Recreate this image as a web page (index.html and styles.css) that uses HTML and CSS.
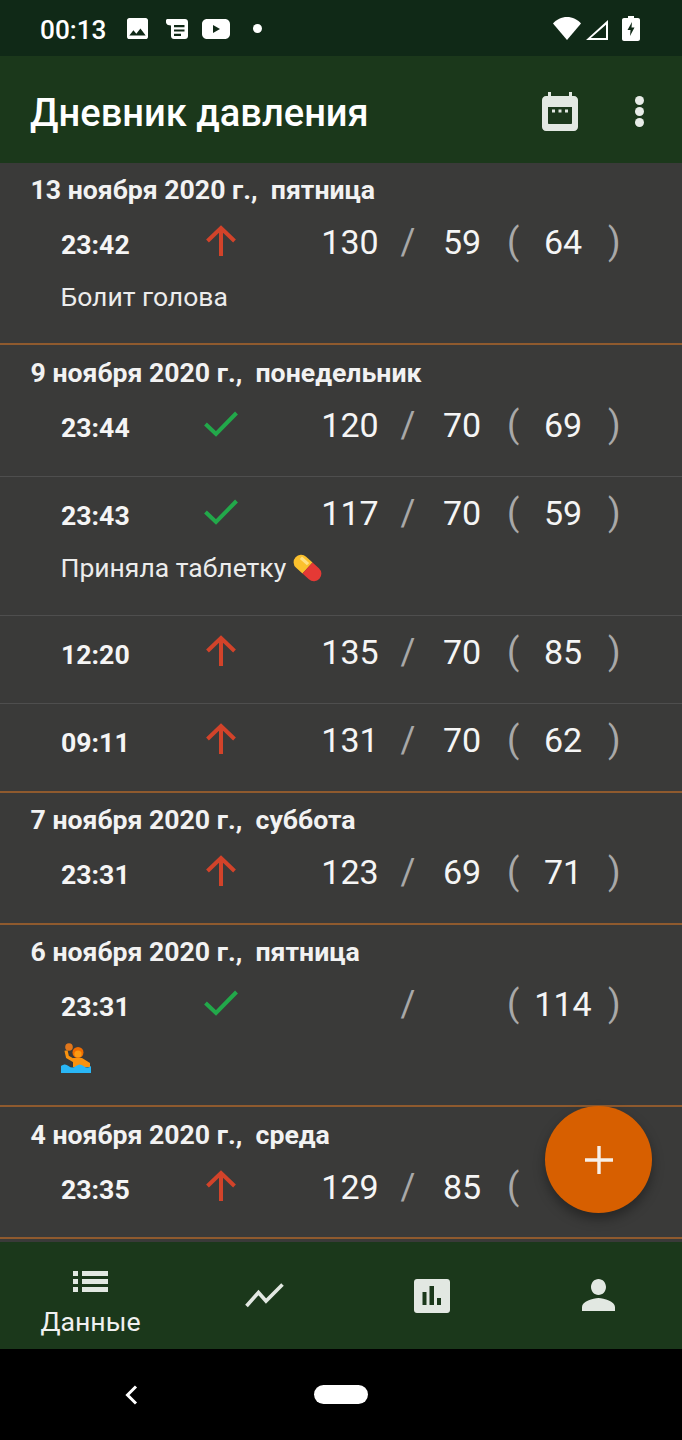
FILE: index.html
```html
<!DOCTYPE html>
<html lang="ru">
<head>
<meta charset="utf-8">
<title>Дневник давления</title>
<link rel="stylesheet" href="styles.css">
</head>
<body>
<div class="phone">
  <div class="statusbar">
    <span class="clock">00:13</span>
    <svg class="st-img" viewBox="3 3 18 18"><path d="M21 19V5c0-1.100-.9-2-2-2H5c-1.100 0-2 .9-2 2v14c0 1.100.9 2 2 2h14c1.100 0 2-.9 2-2zM8.500 13.500l2.500 3.010L14.500 12l4.500 6H5l3.500-4.500z"/></svg>
    <svg class="st-news" viewBox="0 0 22 20"><path fill-rule="evenodd" d="M0 1.500C0 .7.700 0 1.500 0H19c1.700 0 3 1.300 3 3v14c0 1.700-1.300 3-3 3H8c-1.700 0-3-1.300-3-3V6.500L2 6C.8 5.500 0 4.500 0 3.300zM8 6v2.200h10.500V6zM8 10.400v2.200h10.500v-2.200zM8 14.800V17h7v-2.200z"/></svg>
    <svg class="st-yt" viewBox="0 0 28 20"><path fill-rule="evenodd" d="M5 0h18c2.800 0 5 2.200 5 5v10c0 2.800-2.200 5-5 5H5c-2.800 0-5-2.200-5-5V5c0-2.800 2.200-5 5-5zM11 6v8l7-4z"/></svg>
    <span class="st-dot"></span>
    <span class="st-spacer"></span>
    <svg class="st-wifi" viewBox="0 0 28 23"><path d="M14 23 0 6.500C3.500 2.500 8.500 0 14 0s10.500 2.500 14 6.500z"/></svg>
    <svg class="st-signal" viewBox="0 0 22 20"><path fill-rule="evenodd" d="M22 0v20H0zM20 4.800 4.800 18H20z"/></svg>
    <svg class="st-batt" viewBox="0 0 18 25"><path fill-rule="evenodd" d="M6 0h6v2h4c1.100 0 2 .9 2 2v19c0 1.100-.9 2-2 2H2c-1.100 0-2-.9-2-2V4c0-1.100.9-2 2-2h4zM10 6 5.500 14H8.500L8 20l4.500-8.500H9.500z"/></svg>
  </div>

  <header class="appbar">
    <h1 class="title">Дневник давления</h1>
    <svg class="ab-cal" viewBox="0 0 36 39"><path fill-rule="evenodd" d="M6 0h3v4h18V0h3v4h2c2.200 0 4 1.800 4 4v27c0 2.200-1.800 4-4 4H4c-2.200 0-4-1.800-4-4V8c0-2.200 1.800-4 4-4h2zM6 15v16c0 .6.400 1 1 1h22c.6 0 1-.4 1-1V15zM10 17.500h3v3h-3zM16.500 17.500h3v3h-3zM23 17.500h3v3h-3z"/></svg>
    <div class="ab-more"><span></span><span></span><span></span></div>
  </header>

  <main class="list">
    <section class="group">
      <div class="date">13 ноября 2020 г.,&nbsp; пятница</div>
      <div class="entry has-note">
        <div class="vals"><span class="time">23:42</span><svg class="mark up" viewBox="0 0 32 32"><path d="M16 31V3M2.500 16 16 3l13.500 13"/></svg><span class="sys">130</span><span class="sep">/</span><span class="dia">59</span><span class="sep par">(</span><span class="pulse">64</span><span class="sep close">)</span></div>
        <div class="note">Болит голова</div>
      </div>
    </section>

    <section class="group after-note">
      <div class="date">9 ноября 2020 г.,&nbsp; понедельник</div>
      <div class="entry">
        <div class="vals"><span class="time">23:44</span><svg class="mark ok" viewBox="0 0 34 26"><path d="M1.500 13 12 23 32.500 2"/></svg><span class="sys">120</span><span class="sep">/</span><span class="dia">70</span><span class="sep par">(</span><span class="pulse">69</span><span class="sep close">)</span></div>
      </div>
      <div class="entry has-note">
        <div class="vals"><span class="time">23:43</span><svg class="mark ok" viewBox="0 0 34 26"><path d="M1.500 13 12 23 32.500 2"/></svg><span class="sys">117</span><span class="sep">/</span><span class="dia">70</span><span class="sep par">(</span><span class="pulse">59</span><span class="sep close">)</span></div>
        <div class="note">Приняла таблетку <svg class="emoji-pill" viewBox="3 1 26 28"><g transform="rotate(42 16 15)"><path fill="#fbc02d" d="M8 8h8v14H8a7 7 0 0 1 0-14z"/><path fill="#e53935" d="M16 8h8a7 7 0 0 1 0 14h-8z"/><path fill="#ffe082" d="M5 10.500h9v3H5z"/></g></svg></div>
      </div>
      <div class="entry">
        <div class="vals"><span class="time">12:20</span><svg class="mark up" viewBox="0 0 32 32"><path d="M16 31V3M2.500 16 16 3l13.500 13"/></svg><span class="sys">135</span><span class="sep">/</span><span class="dia">70</span><span class="sep par">(</span><span class="pulse">85</span><span class="sep close">)</span></div>
      </div>
      <div class="entry">
        <div class="vals"><span class="time">09:11</span><svg class="mark up" viewBox="0 0 32 32"><path d="M16 31V3M2.500 16 16 3l13.500 13"/></svg><span class="sys">131</span><span class="sep">/</span><span class="dia">70</span><span class="sep par">(</span><span class="pulse">62</span><span class="sep close">)</span></div>
      </div>
    </section>

    <section class="group">
      <div class="date">7 ноября 2020 г.,&nbsp; суббота</div>
      <div class="entry">
        <div class="vals"><span class="time">23:31</span><svg class="mark up" viewBox="0 0 32 32"><path d="M16 31V3M2.500 16 16 3l13.500 13"/></svg><span class="sys">123</span><span class="sep">/</span><span class="dia">69</span><span class="sep par">(</span><span class="pulse">71</span><span class="sep close">)</span></div>
      </div>
    </section>

    <section class="group">
      <div class="date">6 ноября 2020 г.,&nbsp; пятница</div>
      <div class="entry has-note">
        <div class="vals"><span class="time">23:31</span><svg class="mark ok" viewBox="0 0 34 26"><path d="M1.500 13 12 23 32.500 2"/></svg><span class="sys"></span><span class="sep">/</span><span class="dia"></span><span class="sep par">(</span><span class="pulse">114</span><span class="sep close">)</span></div>
        <div class="note"><svg class="emoji-polo" viewBox="0 0 30 30"><circle cx="8" cy="4" r="3.800" fill="#e0761c"/><path fill="none" stroke="#f9920f" stroke-width="3.200" d="M5 7.500 6.500 14l7 4"/><circle cx="17" cy="9.500" r="5.500" fill="#ef6c00"/><circle cx="17" cy="11" r="3.600" fill="#fb9a12"/><path fill="#f9920f" d="M12 15h9l8 5v4H12z"/><path fill="#29b6f6" d="M0 23c3-2 5-2 7.500 0s5 2 7.500 0 5-2 7.500 0 5 2 7.500 0v7H0z"/></svg></div>
      </div>
    </section>

    <section class="group after-note">
      <div class="date">4 ноября 2020 г.,&nbsp; среда</div>
      <div class="entry">
        <div class="vals"><span class="time">23:35</span><svg class="mark up" viewBox="0 0 32 32"><path d="M16 31V3M2.500 16 16 3l13.500 13"/></svg><span class="sys">129</span><span class="sep">/</span><span class="dia">85</span><span class="sep par">(</span></div>
      </div>
    </section>

    <button class="fab" aria-label="Добавить"><svg viewBox="0 0 28 28"><path d="M12.300 0h3.400v12.300H28v3.400H15.700V28h-3.400V15.700H0v-3.400h12.300z"/></svg></button>
  </main>

  <nav class="tabs">
    <div class="tab">
      <svg class="t-list" viewBox="0 0 35 21"><path d="M0 0h5v5H0zM9 0h26v5H9zM0 8h5v5H0zM9 8h26v5H9zM0 16h5v5H0zM9 16h26v5H9z"/></svg>
      <span class="tab-label">Данные</span>
    </div>
    <div class="tab"><svg class="t-trend" viewBox="0 0 39 25"><path d="M1.500 23 13.500 9.500 21 18 37.500 1.500" fill="none" stroke="currentColor" stroke-width="3.600"/></svg></div>
    <div class="tab"><svg class="t-chart" viewBox="0 0 36 34"><path fill-rule="evenodd" d="M3 0h30c1.700 0 3 1.300 3 3v28c0 1.700-1.300 3-3 3H3c-1.700 0-3-1.300-3-3V3C0 1.300 1.300 0 3 0zM8.500 13v13h4V13zM15.500 7v19h4.500V7zM23 19v7h4v-7z"/></svg></div>
    <div class="tab"><svg class="t-user" viewBox="0 0 33 32"><path d="M16.500 0c4.200 0 7.500 3.600 7.500 8s-3.300 8-7.500 8S9 12.400 9 8s3.300-8 7.500-8zM0 32v-4c0-5.500 11-9 16.500-9S33 22.500 33 28v4z"/></svg></div>
  </nav>

  <div class="sysnav">
    <svg class="sn-back" viewBox="0 0 13 20"><path d="M11 1.500 2.500 10l8.500 8.500"/></svg>
    <span class="sn-home"></span>
  </div>
</div>
</body>
</html>
```
FILE: styles.css
```css
* { box-sizing: border-box; }
html, body { margin: 0; padding: 0; }
body { background: #000; font-family: Roboto, "Noto Sans", sans-serif; color: #fff; }
.phone { width: 682px; height: 1440px; display: flex; flex-direction: column; overflow: hidden; }

.statusbar { height: 56px; flex: none; background: #102917; display: flex; align-items: center; padding: 0 42px 0 40px; }
.clock { font-size: 26.2px; font-weight: 500; margin-top: 3px; width: 87px; }
.statusbar svg { display: block; fill: #fff; }
.st-img { width: 21px; height: 21px; margin-top: 1px; }
.st-news { width: 22px; height: 20px; margin-left: 18px; margin-top: 1px; }
.st-yt { width: 28px; height: 20px; margin-left: 14px; margin-top: 1px; }
.st-dot { width: 9px; height: 9px; border-radius: 50%; background: #fff; margin-left: 23px; margin-top: 1px; }
.st-spacer { flex: 1; }
.st-wifi { width: 28px; height: 23px; }
.st-signal { width: 22px; height: 20px; margin-left: 5px; margin-top: 3px; }
.st-batt { width: 18px; height: 25px; margin-left: 14px; }

.appbar { height: 107px; flex: none; background: #1b381b; display: flex; align-items: center; padding-left: 30px; }
.title { margin: 7px 0 0; font-size: 38.1px; line-height: 44px; font-weight: 500; flex: 1; color: #fff; }
.ab-cal { width: 36px; height: 39px; fill: #e2e8e2; display: block; margin-top: 3px; }
.ab-more { width: 9px; margin: 3px 38px 0 57px; display: flex; flex-direction: column; gap: 2px; }
.ab-more span { width: 9px; height: 9px; border-radius: 50%; background: #e8ece8; }

.list { flex: 1; min-height: 0; background: #3a3a39; position: relative; overflow: hidden; }
.group { border-bottom: 2px solid #8f5a2e; }
.group.after-note { margin-top: 1px; }
.date { height: 43px; padding: 13px 0 0 30.5px; font-size: 26.67px; line-height: 28px; font-weight: 700; color: #f2f2f2; white-space: pre; }
.entry { height: 88px; border-bottom: 1px solid #4e4e4e; }
.entry:last-child { border-bottom: 0; height: 87px; }
.entry.has-note { height: 139px; }
.entry.has-note:last-child { height: 137px; }
.group:last-of-type .entry { height: 86px; }
.vals { height: 76px; display: grid; grid-template-columns: 129px 60px 50px 100px 16px 92px 8px 94px 7px; align-items: center; padding-left: 61px; }
.time { font-size: 26.67px; font-weight: 700; color: #f5f5f5; padding-top: 1px; }
.mark { fill: none; justify-self: center; display: block; stroke-width: 4px; margin-left: 2px; margin-top: -6px; grid-column: 2; }
.mark.up { width: 32px; height: 32px; stroke: #d2432a; }
.mark.ok { width: 34px; height: 26px; stroke: #22a84a; }
.sys, .dia, .pulse { font-size: 34px; text-align: center; color: #f5f5f5; line-height: 40px; margin-top: -4px; }
.sys { grid-column: 4; }
.dia { grid-column: 6; }
.pulse { grid-column: 8; }
.sep { font-size: 36px; line-height: 40px; color: #a8a8a8; text-align: center; margin-top: -4px; }
.sep.par { margin-left: -1px; }
.sep.close { margin-left: -2px; }
.note { font-size: 26.5px; line-height: 32px; padding: 0 0 0 60.5px; margin-top: -1px; color: #ececec; display: flex; align-items: center; gap: 6px; }
.emoji-pill { width: 31px; height: 30px; display: block; }
.emoji-polo { width: 30px; height: 30px; display: block; }

.fab { position: absolute; left: 545px; top: 943px; width: 107px; height: 107px; border-radius: 50%; border: 0; padding: 0; background: #d75f00; box-shadow: 0 6px 12px rgba(0,0,0,.35); display: flex; align-items: center; justify-content: center; }
.fab svg { width: 28px; height: 28px; fill: #f7efe8; display: block; }

.tabs { height: 107px; flex: none; background: #1b381b; display: grid; grid-template-columns: 181px 167px 167px 167px; color: #e2e8e2; }
.tab { display: flex; flex-direction: column; align-items: center; justify-content: center; }
.tab svg { display: block; fill: #e2e8e2; }
.tab:first-child { justify-content: flex-start; padding-top: 29px; }
.t-list { width: 35px; height: 21px; }
.tab-label { font-size: 26.67px; line-height: 30px; margin-top: 15px; color: #f0f0f0; }
.t-trend { width: 39px; height: 25px; margin-top: -1px; }
.t-chart { width: 36px; height: 34px; }
.t-user { width: 33px; height: 32px; margin-top: -1px; }

.sysnav { height: 91px; flex: none; background: #000; display: flex; align-items: flex-start; padding: 36px 0 0 125px; }
.sn-back { width: 13px; height: 20px; fill: none; stroke: #fff; stroke-width: 3px; display: block; }
.sn-home { width: 54px; height: 19px; border-radius: 10px; background: #fff; margin-left: 176px; }
```
